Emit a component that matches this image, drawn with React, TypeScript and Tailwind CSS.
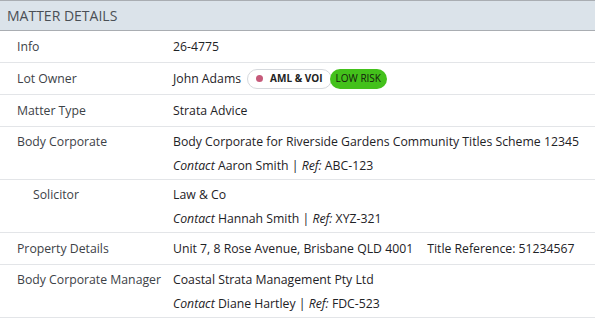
const rows: {
  label: string;
  indent?: boolean;
  lines: React.ReactNode[];
}[] = [
  { label: "Info", lines: ["26-4775"] },
  {
    label: "Lot Owner",
    lines: [
      <span className="flex items-center">
        John Adams
        <span className="ml-[6px] flex items-center">
          <span className="flex h-[20px] items-center gap-[7px] rounded-full border border-[#d6d9dd] bg-white pl-[8px] pr-[8px] text-[10px] font-bold text-[#222]">
            <span className="h-[7px] w-[7px] rounded-full bg-[#c65a7a]" />
            AML &amp; VOI
          </span>
          <span className="-ml-[2px] flex h-[20px] items-center rounded-full bg-[#43c11b] px-[6px] text-[10px] font-medium text-[#14200c]">
            LOW RISK
          </span>
        </span>
      </span>,
    ],
  },
  { label: "Matter Type", lines: ["Strata Advice"] },
  {
    label: "Body Corporate",
    lines: [
      "Body Corporate for Riverside Gardens Community Titles Scheme 12345",
      <>
        <i>Contact</i> Aaron Smith | <i>Ref:</i> ABC-123
      </>,
    ],
  },
  {
    label: "Solicitor",
    indent: true,
    lines: [
      "Law & Co",
      <>
        <i>Contact</i> Hannah Smith | <i>Ref:</i> XYZ-321
      </>,
    ],
  },
  {
    label: "Property Details",
    lines: [
      <span className="flex gap-[14px]">
        <span>Unit 7, 8 Rose Avenue, Brisbane QLD 4001</span>
        <span>Title Reference: 51234567</span>
      </span>,
    ],
  },
  {
    label: "Body Corporate Manager",
    lines: [
      "Coastal Strata Management Pty Ltd",
      <>
        <i>Contact</i> Diane Hartley | <i>Ref:</i> FDC-523
      </>,
    ],
  },
];

export default function App() {
  return (
    <div className="h-[320px] w-[595px] overflow-hidden bg-white font-['Open_Sans',sans-serif] text-[12.25px]">
      <div className="flex h-[31px] items-center border-y border-[#a9adb2] bg-[#dbe3ea] px-[7px] text-[14px] text-[#4a4f55]">
        MATTER DETAILS
      </div>
      {rows.map((r) => (
        <div
          key={r.label}
          className={`flex border-b border-[#e3e5e8] leading-[21px] ${r.lines.length > 1 ? "pt-[4px] pb-[3px]" : "py-[5px]"}`}
        >
          <div className={`w-[173px] shrink-0 text-[#3d4247] ${r.indent ? "pl-[33px]" : "pl-[17px]"}`}>
            {r.label}
          </div>
          <div className="text-[#1e2226]">
            {r.lines.map((l, i) => (
              <div key={i} className={i > 0 ? "mt-[3px]" : ""}>
                {l}
              </div>
            ))}
          </div>
        </div>
      ))}
    </div>
  );
}
